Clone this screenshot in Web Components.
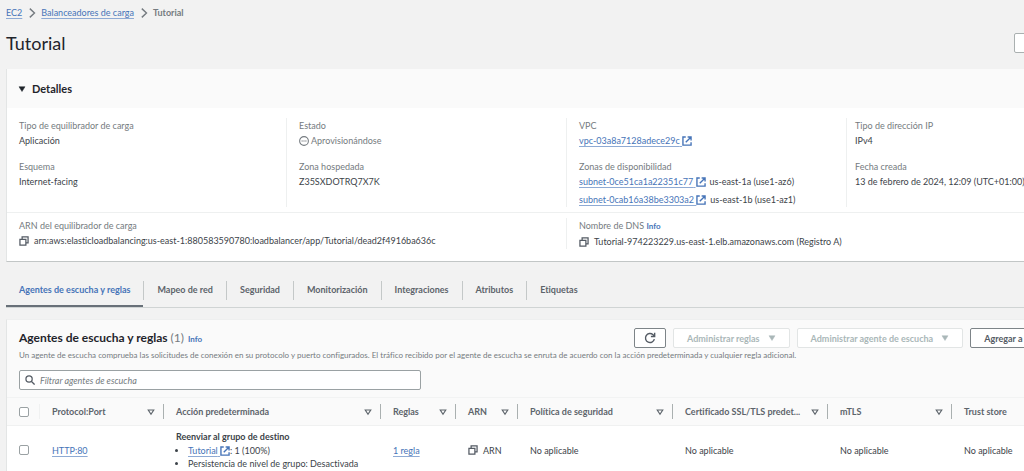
<!DOCTYPE html>
<html lang="es">
<head>
<meta charset="utf-8">
<meta name="viewport" content="width=device-width, initial-scale=1">
<title>Tutorial | Balanceadores de carga | EC2</title>
<style>
  :root {
    --text: #3c4349;
    --strong: #1f242b;
    --muted: #757b80;
    --link: #4674b8;
    --line: #eef0f0;
    --page: #f2f2f2;
    --head: #fafafa;
  }
  body {
    margin: 0;
    background: var(--page);
    color: var(--text);
    font: 9px/15px Lato, "Noto Sans", sans-serif;
    font-variant-ligatures: none;
    overflow: hidden;
  }
</style>
</head>
<body>
<lb-page></lb-page>

<script>
const define = (name, html) => {
  const template = document.createElement('template');
  template.innerHTML = html;
  customElements.define(name, class extends HTMLElement {
    constructor() {
      super();
      this.attachShadow({ mode: 'open' }).append(template.content.cloneNode(true));
    }
  });
};

const ICONS = {
  chevron: '<path d="M4.500 1 12 8l-7.500 7" stroke-width="2.200"/>',
  external: '<path d="M6 1.500H1.500v13h13V10M9 1.500h5.500V7M14.500 1.500 6 10" stroke-width="2.200"/>',
  copy: '<path d="M1.500 5.500h9.500v9H1.500zM5 5V1.500h9.500v9.500H11.500" stroke-width="2"/>',
  pending: '<circle cx="8" cy="8" r="7" stroke-width="1.700"/><path d="M4 8h2M7 8h2M10 8h2" stroke-width="1.800"/>',
  search: '<circle cx="6.500" cy="6.500" r="5" stroke-width="2"/><path d="m10 10 5.300 5.300" stroke-width="2"/>',
  refresh: '<path d="M13.800 9.500A6 6 0 1 1 12 3.600L14 5.500" stroke-width="1.900"/><path d="M14.200 1v5H9.200" stroke-width="1.900"/>',
  down: '<path d="M2 3.500h12L8 13z" fill="currentColor" stroke-width="1"/>',
  sort: '<path d="M2.500 4h11L8 12.500z" stroke-width="2.300"/>'
};
customElements.define('ui-icon', class extends HTMLElement {
  constructor() {
    super();
    this.attachShadow({ mode: 'open' });
  }
  connectedCallback() {
    this.shadowRoot.innerHTML = `
      <style>
        :host { display: inline-block; width: var(--size, 10px); height: var(--size, 10px); flex: none; vertical-align: middle; }
        svg { display: block; width: 100%; height: 100%; fill: none; stroke: currentColor; }
      </style>
      <svg viewBox="0 0 16 16" aria-hidden="true">${ICONS[this.getAttribute('name')]}</svg>`;
  }
});

customElements.define('ui-link', class extends HTMLElement {
  constructor() {
    super();
    this.attachShadow({ mode: 'open' });
  }
  connectedCallback() {
    const external = this.hasAttribute('external');
    this.shadowRoot.innerHTML = `
      <style>
        :host { display: inline-block; }
        a { display: inline-flex; align-items: center; color: var(--link); text-decoration: none; }
        span { text-decoration: underline; text-decoration-color: #8eaad4; text-decoration-thickness: 1px; text-underline-offset: 2px; }
        :host([external]) span { white-space: pre; }
        :host([info]) a { font-size: 8px; font-weight: 700; }
        :host([info]) span { text-decoration: none; }
      </style>
      <a href="#"><span><slot></slot>${external ? ' </span><ui-icon name="external"></ui-icon>' : '</span>'}</a>`;
  }
});

define('copy-text', `
  <style>
    :host { display: flex; align-items: center; gap: 5px; }
    button { display: flex; border: 0; padding: 0; background: none; color: #545b64; }
  </style>
  <button type="button" aria-label="Copiar"><ui-icon name="copy"></ui-icon></button>
  <span><slot></slot></span>`);

define('bread-crumbs', `
  <style>
    :host { display: block; padding-top: 5px; }
    ol { display: flex; align-items: center; gap: 4px; margin: 0; padding: 0; list-style: none; }
    li { display: flex; align-items: center; gap: 5px; color: var(--muted); }
    b { font-weight: 700; }
  </style>
  <nav aria-label="Ruta">
    <ol>
      <li><ui-link>EC2</ui-link><ui-icon name="chevron"></ui-icon></li>
      <li><ui-link>Balanceadores de carga</ui-link><ui-icon name="chevron"></ui-icon></li>
      <li><b aria-current="page">Tutorial</b></li>
    </ol>
  </nav>`);

define('page-header', `
  <style>
    :host { display: flex; align-items: center; padding: 11px 0 14px; }
    h1 { flex: 1; margin: 0; color: var(--strong); font-size: 18px; font-weight: 400; line-height: 24px; }
    button { width: 40px; height: 20px; margin-right: -30px; border: 1px solid #aab0b0; border-radius: 2px; background: #fff; }
  </style>
  <h1><slot></slot></h1>
  <button type="button" aria-label="Acciones"></button>`);

define('kv-field', `
  <style>
    :host { display: block; white-space: nowrap; }
    dl, dd { margin: 0; }
    dt { color: var(--muted); }
  </style>
  <dl><dt><slot name="label"></slot></dt><dd><slot></slot></dd></dl>`);

define('details-panel', `
  <style>
    :host { display: block; background: #fff; border-left: 1px solid #e3e5e5; border-bottom: 1px solid #c2c6c6; }
    summary { display: flex; align-items: center; gap: 6px; height: 39px; padding-left: 11px; background: var(--head); color: var(--strong); list-style: none; }
    summary ui-icon { --size: 8px; }
    h2 { margin: 0; font-size: 11px; font-weight: 700; }
    .row { display: grid; padding-left: 12px; }
    .facts { grid-template-columns: minmax(0, 267fr) repeat(2, minmax(0, 280fr)) minmax(0, 178fr); padding-top: 10px; padding-bottom: 5px; border-bottom: 1px solid var(--line); }
    .names { grid-template-columns: minmax(0, 547fr) minmax(0, 458fr); padding-top: 5px; padding-bottom: 12px; }
    .col { display: flex; flex-direction: column; gap: 11px; }
    .col + .col { padding-left: 12px; border-left: 1px solid var(--line); }
    .facts .col:last-child { padding-left: 8px; }
    .state { display: flex; align-items: center; gap: 2px; color: var(--muted); }
    .zones { display: grid; gap: 3px; }
    .zones div { display: flex; align-items: center; gap: 4px; }
  </style>
  <details open>
    <summary><ui-icon name="down"></ui-icon><h2>Detalles</h2></summary>
    <div class="row facts">
      <div class="col">
        <kv-field><span slot="label">Tipo de equilibrador de carga</span>Aplicación</kv-field>
        <kv-field><span slot="label">Esquema</span>Internet-facing</kv-field>
      </div>
      <div class="col">
        <kv-field><span slot="label">Estado</span><div class="state"><ui-icon name="pending"></ui-icon>Aprovisionándose</div></kv-field>
        <kv-field><span slot="label">Zona hospedada</span>Z35SXDOTRQ7X7K</kv-field>
      </div>
      <div class="col">
        <kv-field><span slot="label">VPC</span><ui-link external>vpc-03a8a7128adece29c</ui-link></kv-field>
        <kv-field><span slot="label">Zonas de disponibilidad</span>
          <div class="zones">
            <div><ui-link external>subnet-0ce51ca1a22351c77</ui-link><span>us-east-1a (use1-az6)</span></div>
            <div><ui-link external>subnet-0cab16a38be3303a2</ui-link><span>us-east-1b (use1-az1)</span></div>
          </div>
        </kv-field>
      </div>
      <div class="col">
        <kv-field><span slot="label">Tipo de dirección IP</span>IPv4</kv-field>
        <kv-field><span slot="label">Fecha creada</span>13 de febrero de 2024, 12:09 (UTC+01:00)</kv-field>
      </div>
    </div>
    <div class="row names">
      <div class="col">
        <kv-field><span slot="label">ARN del equilibrador de carga</span><copy-text>arn:aws:elasticloadbalancing:us-east-1:880583590780:loadbalancer/app/Tutorial/dead2f4916ba636c</copy-text></kv-field>
      </div>
      <div class="col">
        <kv-field><span slot="label">Nombre de DNS <ui-link info>Info</ui-link></span><copy-text>Tutorial-974223229.us-east-1.elb.amazonaws.com (Registro A)</copy-text></kv-field>
      </div>
    </div>
  </details>`);

define('tab-bar', `
  <style>
    :host { display: flex; height: 33px; margin-top: 12px; border-bottom: 1px solid #d0d4d4; }
    button { display: flex; align-items: center; border: 0; border-bottom: 2px solid transparent; padding: 0 13px; background: none; color: #5d646b; font: inherit; font-weight: 700; }
    button[aria-selected="true"] { border-color: #687078; color: var(--link); }
    i { align-self: center; width: 1px; height: 19px; background: #c4c8c8; }
  </style>
  <button type="button" role="tab" aria-selected="true">Agentes de escucha y reglas</button><i></i>
  <button type="button" role="tab">Mapeo de red</button><i></i>
  <button type="button" role="tab">Seguridad</button><i></i>
  <button type="button" role="tab">Monitorización</button><i></i>
  <button type="button" role="tab">Integraciones</button><i></i>
  <button type="button" role="tab">Atributos</button><i></i>
  <button type="button" role="tab">Etiquetas</button>`);

define('ui-button', `
  <style>
    :host { display: block; flex: none; }
    button { display: flex; align-items: center; justify-content: center; gap: 8px; height: 20px; border: 1px solid #7d8488; border-radius: 2px; padding: 0 13px; background: #fff; color: #545b64; font: inherit; font-weight: 700; white-space: nowrap; }
    :host([muted]) button { border-color: #e2e5e5; color: #aab7b8; }
    :host([icon]) button { padding: 0 9px; }
  </style>
  <button type="button"><slot></slot></button>`);

define('listeners-table', `
  <style>
    :host { display: block; }
    table { width: 100%; table-layout: fixed; border-collapse: collapse; white-space: nowrap; background: #fff; }
    th, td { padding: 0 0 0 12px; text-align: left; }
    th { height: 27px; background: var(--head); color: #5d646b; font-weight: 700; border-top: 1px solid #f2f3f3; border-bottom: 1px solid #f0f1f1; }
    th div { display: flex; align-items: center; justify-content: space-between; height: 15px; padding-right: 8px; border-right: 1px solid #aab0b0; }
    th:first-child div { border-color: #f0f1f1; }
    th:last-child div { border: 0; }
    th ui-icon { --size: 8px; }
    td { padding-top: 4px; padding-bottom: 4px; }
    b { display: block; line-height: 14px; }
    ul { margin: 0; padding: 0 0 0 12px; }
    li { line-height: 13px; }
    input { display: block; appearance: none; box-sizing: border-box; width: 10px; height: 10px; margin: 0; border: 1px solid #9aa1a3; border-radius: 2px; background: #fff; }
    .check { width: 33px; } .port { width: 124px; } .action { width: 217px; } .rules { width: 75px; }
    .arn { width: 62px; } .policy, .cert { width: 155px; } .mtls { width: 124px; }
  </style>
  <table>
    <colgroup><col class="check"><col class="port"><col class="action"><col class="rules"><col class="arn"><col class="policy"><col class="cert"><col class="mtls"><col></colgroup>
    <thead>
      <tr>
        <th><div><input type="checkbox" aria-label="Seleccionar todo"></div></th>
        <th><div>Protocol:Port<ui-icon name="sort"></ui-icon></div></th>
        <th><div>Acción predeterminada<ui-icon name="sort"></ui-icon></div></th>
        <th><div>Reglas<ui-icon name="sort"></ui-icon></div></th>
        <th><div>ARN<ui-icon name="sort"></ui-icon></div></th>
        <th><div>Política de seguridad<ui-icon name="sort"></ui-icon></div></th>
        <th><div>Certificado SSL/TLS predet...<ui-icon name="sort"></ui-icon></div></th>
        <th><div>mTLS<ui-icon name="sort"></ui-icon></div></th>
        <th><div>Trust store</div></th>
      </tr>
    </thead>
    <tbody>
      <tr>
        <td><input type="checkbox" aria-label="Seleccionar HTTP:80"></td>
        <td><ui-link>HTTP:80</ui-link></td>
        <td><b>Reenviar al grupo de destino</b>
          <ul><li><ui-link external>Tutorial</ui-link>: 1 (100%)</li><li>Persistencia de nivel de grupo: Desactivada</li></ul>
        </td>
        <td><ui-link>1 regla</ui-link></td>
        <td><copy-text>ARN</copy-text></td>
        <td>No aplicable</td>
        <td>No aplicable</td>
        <td>No aplicable</td>
        <td>No aplicable</td>
      </tr>
    </tbody>
  </table>`);

define('listeners-panel', `
  <style>
    :host { display: block; margin-top: 11px; border-left: 1px solid #e3e5e5; border-top: 1px solid #eeefef; background: var(--head); }
    header { padding: 8px 0 7px 12px; }
    .top { display: grid; grid-template-columns: 61.2% auto; align-items: center; }
    .title { display: flex; align-items: baseline; gap: 4px; }
    h2 { margin: 0; color: var(--strong); font-size: 12px; line-height: 20px; font-weight: 700; }
    h2 span { color: var(--muted); font-weight: 400; }
    .actions { display: flex; gap: 7px; }
    .actions ui-icon { --size: 8px; }
    .actions [icon] ui-icon { --size: 12px; }
    p { margin: 0; color: var(--muted); font-size: 8px; white-space: nowrap; }
    label { display: flex; align-items: center; gap: 5px; box-sizing: border-box; width: 40%; height: 20px; margin-top: 7px; padding-left: 5px; border: 1px solid #9aa1a3; border-radius: 2px; background: #fff; color: #545b64; }
    input { flex: 1; border: 0; padding: 0; outline: 0; background: none; font: inherit; }
    input::placeholder { color: var(--muted); font-style: italic; opacity: 1; }
  </style>
  <header>
    <div class="top">
      <div class="title"><h2>Agentes de escucha y reglas <span>(1)</span></h2><ui-link info>Info</ui-link></div>
      <div class="actions">
        <ui-button icon aria-label="Actualizar"><ui-icon name="refresh"></ui-icon></ui-button>
        <ui-button muted>Administrar reglas<ui-icon name="down"></ui-icon></ui-button>
        <ui-button muted>Administrar agente de escucha<ui-icon name="down"></ui-icon></ui-button>
        <ui-button>Agregar a</ui-button>
      </div>
    </div>
    <p>Un agente de escucha comprueba las solicitudes de conexión en su protocolo y puerto configurados. El tráfico recibido por el agente de escucha se enruta de acuerdo con la acción predeterminada y cualquier regla adicional.</p>
    <label><ui-icon name="search"></ui-icon><input type="text" aria-label="Filtrar agentes de escucha" placeholder="Filtrar agentes de escucha"></label>
  </header>
  <listeners-table></listeners-table>`);

define('lb-page', `
  <style>
    :host { display: block; padding-left: 6px; overflow: hidden; }
  </style>
  <bread-crumbs></bread-crumbs>
  <page-header>Tutorial</page-header>
  <main>
    <details-panel></details-panel>
    <tab-bar role="tablist"></tab-bar>
    <listeners-panel></listeners-panel>
  </main>`);
</script>
</body>
</html>
